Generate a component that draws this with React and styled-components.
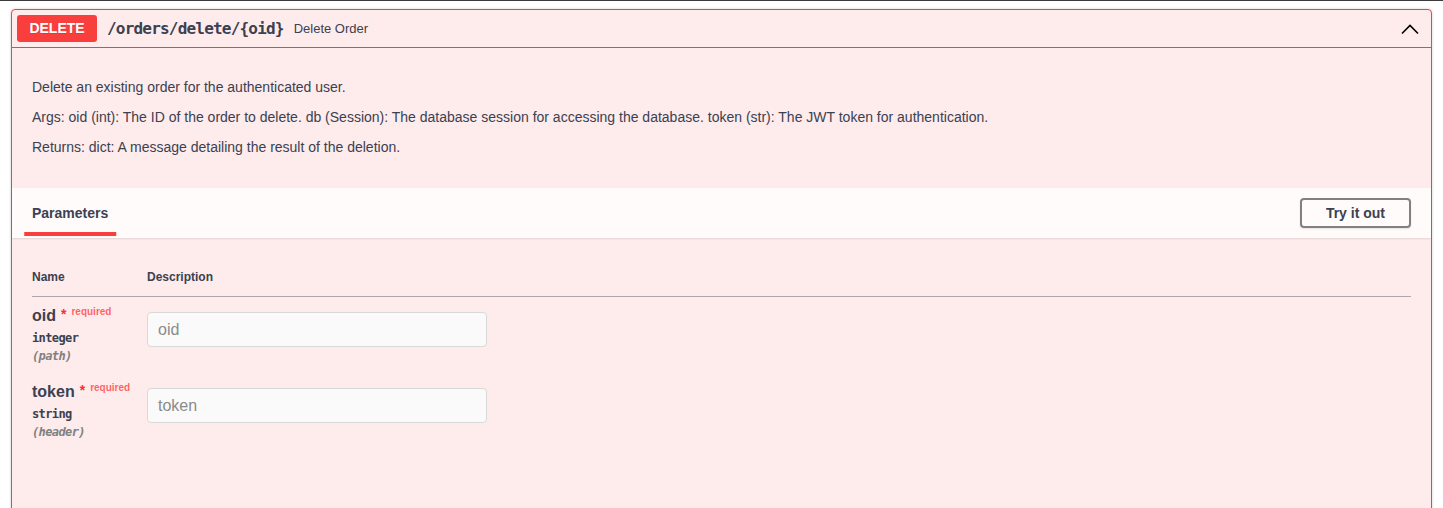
import styled, { createGlobalStyle } from "styled-components";

const GlobalStyle = createGlobalStyle`
  html, body {
    margin: 0;
    padding: 0;
    background: #fff;
    overflow: hidden;
  }
  body {
    font-family: "Liberation Sans", Arial, sans-serif;
    color: #3b4151;
  }
`;

const Page = styled.div`
  border-top: 1px solid #3a3a3a;
  padding: 8px 11px 0;
  height: 508px;
  box-sizing: border-box;
`;

const OpBlock = styled.div`
  border: 1px solid #f93e3e;
  border-radius: 4px;
  background: rgba(249, 62, 62, 0.1);
  box-shadow: 0 0 3px rgba(0, 0, 0, 0.19);
  min-height: 560px;
`;

const Summary = styled.div`
  display: flex;
  align-items: center;
  padding: 5px;
  border-bottom: 1px solid #f93e3e;
`;

const Method = styled.span`
  min-width: 80px;
  padding: 6px 0;
  text-align: center;
  background: #f93e3e;
  color: #fff;
  border-radius: 3px;
  font-size: 14px;
  line-height: 15px;
  font-weight: 700;
  text-shadow: 0 1px 0 rgba(0, 0, 0, 0.1);
`;

const Path = styled.span`
  padding: 0 10px;
  font-family: "DejaVu Sans Mono", monospace;
  font-size: 16px;
  font-weight: 700;
  letter-spacing: -0.8px;
  color: #3b4151;
`;

const SummaryText = styled.span`
  flex: 1;
  font-size: 13px;
  color: #3b4151;
`;

const Chevron = styled.svg`
  width: 20px;
  height: 20px;
  margin-right: 6px;
`;

const Description = styled.div`
  padding: 29px 20px 31px;
`;

const Para = styled.p`
  margin: 10px 0;
  font-size: 14px;
  line-height: 20px;
  color: #3b4151;
  &:first-child { margin-top: 0; }
  &:last-child { margin-bottom: 0; }
`;

const SectionHeader = styled.div`
  display: flex;
  align-items: center;
  justify-content: space-between;
  min-height: 50px;
  box-sizing: border-box;
  padding: 8px 20px;
  background: rgba(255, 255, 255, 0.8);
  box-shadow: 0 1px 2px rgba(0, 0, 0, 0.1);
`;

const TabTitle = styled.h4`
  margin: 0;
  font-size: 14px;
  font-weight: 700;
  color: #3b4151;
  span {
    position: relative;
  }
  span::after {
    content: "";
    position: absolute;
    left: 50%;
    bottom: -15px;
    width: 120%;
    height: 4px;
    transform: translateX(-50%);
    background: #f93e3e;
  }
`;

const TryButton = styled.button`
  font-family: "Liberation Sans", Arial, sans-serif;
  font-size: 14px;
  font-weight: 700;
  color: #3b4151;
  background: transparent;
  border: 2px solid #808080;
  border-radius: 4px;
  padding: 5px 24px;
  box-shadow: 0 1px 2px rgba(0, 0, 0, 0.1);
`;

const TableContainer = styled.div`
  padding: 20px;
`;

const ParamGrid = styled.div`
  display: grid;
  grid-template-columns: 115px 1fr;
`;

const HeadCell = styled.div`
  font-size: 12px;
  font-weight: 700;
  line-height: 14px;
  padding: 12px 0;
  color: #3b4151;
  border-bottom: 1px solid rgba(59, 65, 81, 0.4);
`;

const NameCell = styled.div`
  padding: 10px 0;
`;

const ParamName = styled.div`
  font-size: 16px;
  line-height: 17px;
  font-weight: 700;
  color: #3b4151;
`;

const Star = styled.span`
  color: #ff2b2b;
  font-size: 14px;
  margin-left: 5px;
  position: relative;
  top: -2px;
`;

const Required = styled.span`
  color: rgba(255, 0, 0, 0.6);
  font-size: 10px;
  font-weight: 700;
  position: relative;
  top: -6px;
  padding-left: 5px;
`;

const ParamType = styled.div`
  font-family: "DejaVu Sans Mono", monospace;
  font-size: 12px;
  line-height: 14px;
  font-weight: 700;
  letter-spacing: -0.6px;
  padding: 5px 0 4px;
  color: #3b4151;
`;

const ParamIn = styled.div`
  font-family: "DejaVu Sans Mono", monospace;
  font-size: 12px;
  line-height: 14px;
  font-style: italic;
  font-weight: 700;
  letter-spacing: -0.6px;
  color: #808080;
`;

const DescCell = styled.div`
  padding: 10px 0 0;
`;

const Input = styled.input`
  display: block;
  width: 340px;
  height: 35px;
  box-sizing: border-box;
  margin: 5px 0;
  padding: 8px 10px;
  border: 1px solid #d9d9d9;
  border-radius: 4px;
  background: #fafafa;
  font-family: "Liberation Sans", Arial, sans-serif;
  font-size: 16px;
  color: #888;
  &::placeholder {
    color: #8a8a8a;
  }
`;

const params = [
  { name: "oid", type: "integer", loc: "(path)" },
  { name: "token", type: "string", loc: "(header)" },
];

export default function App() {
  return (
    <>
      <GlobalStyle />
      <Page>
        <OpBlock>
          <Summary>
            <Method>DELETE</Method>
            <Path>/orders/delete/{"{oid}"}</Path>
            <SummaryText>Delete Order</SummaryText>
            <Chevron viewBox="0 0 20 20">
              <polyline
                points="2,14.5 10,6.5 18,14.5"
                fill="none"
                stroke="#000"
                strokeWidth="1.6"
              />
            </Chevron>
          </Summary>

          <Description>
            <Para>Delete an existing order for the authenticated user.</Para>
            <Para>
              Args: oid (int): The ID of the order to delete. db (Session): The
              database session for accessing the database. token (str): The JWT
              token for authentication.
            </Para>
            <Para>Returns: dict: A message detailing the result of the deletion.</Para>
          </Description>

          <SectionHeader>
            <TabTitle>
              <span>Parameters</span>
            </TabTitle>
            <TryButton>Try it out</TryButton>
          </SectionHeader>

          <TableContainer>
            <ParamGrid>
              <HeadCell>Name</HeadCell>
              <HeadCell>Description</HeadCell>
              {params.map((p) => (
                <>
                  <NameCell key={p.name + "-n"}>
                    <ParamName>
                      {p.name}
                      <Star>*</Star>
                      <Required>required</Required>
                    </ParamName>
                    <ParamType>{p.type}</ParamType>
                    <ParamIn>{p.loc}</ParamIn>
                  </NameCell>
                  <DescCell key={p.name + "-d"}>
                    <Input placeholder={p.name} disabled />
                  </DescCell>
                </>
              ))}
            </ParamGrid>
          </TableContainer>
        </OpBlock>
      </Page>
    </>
  );
}
